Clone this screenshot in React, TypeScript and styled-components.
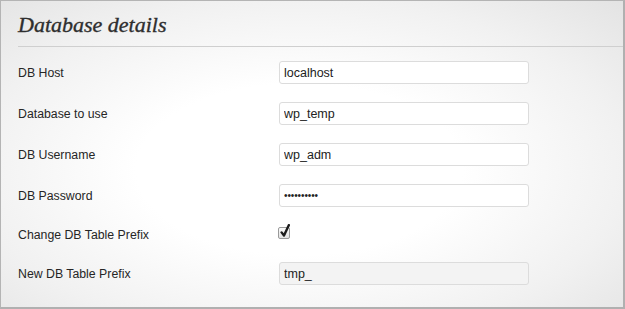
import React from "react";
import styled, { createGlobalStyle } from "styled-components";

const GlobalStyle = createGlobalStyle`
  html, body {
    margin: 0;
    padding: 0;
  }
  body {
    font-family: "Liberation Sans", Arial, sans-serif;
  }
`;

const Frame = styled.div`
  box-sizing: border-box;
  width: 625px;
  height: 309px;
  border-top: 1px solid #b4b4b4;
  border-left: 1px solid #b4b4b4;
  border-right: 2px solid #b0b0b0;
  border-bottom: 2px solid #b0b0b0;
  background: radial-gradient(ellipse 75% 80% at 48% 55%, #ffffff 35%, #f1f1f1 70%, #e2e2e2 100%);
  padding-left: 17px;
  overflow: hidden;
`;

const Header = styled.div`
  height: 45px;
  border-bottom: 1px solid #cfcfcf;
  display: flex;
  align-items: flex-end;
`;

const Title = styled.h2`
  margin: 0 0 8px 0;
  font-family: "Liberation Serif", Georgia, serif;
  font-style: italic;
  font-weight: normal;
  font-size: 22px;
  color: #2e2e2e;
  -webkit-text-stroke: 0.35px #2e2e2e;
`;

const Form = styled.div`
  padding-top: 5px;
`;

const Row = styled.div<{ $compact?: boolean }>`
  display: grid;
  grid-template-columns: 261px 250px;
  align-items: ${(p) => (p.$compact ? "start" : "center")};
  height: ${(p) => (p.$compact ? "28px" : "22px")};
  padding: 9px 0 ${(p) => (p.$compact ? "0" : "10px")};
`;

const Label = styled.label<{ $offset?: number }>`
  font-size: 12.3px;
  color: #262626;
  padding-top: ${(p) => p.$offset ?? 0}px;
`;

const Field = styled.input<{ $readOnly?: boolean; $small?: boolean }>`
  box-sizing: border-box;
  width: 250px;
  height: 23px;
  margin: 0;
  padding: 0 4px;
  border: 1px solid #dcdcdc;
  border-radius: 3px;
  background: ${(p) => (p.$readOnly ? "#f3f3f3" : "#ffffff")};
  font-family: "Liberation Sans", Arial, sans-serif;
  font-size: ${(p) => (p.$small ? "10px" : "12.5px")};
  letter-spacing: ${(p) => (p.$small ? "-0.1px" : "0")};
  color: #222222;
  outline: none;
`;

const CheckBox = styled.span`
  position: relative;
  display: block;
  box-sizing: border-box;
  width: 12px;
  height: 12px;
  margin: 2px 0 0 -1px;
  border: 1px solid #9a9a9a;
  border-radius: 2px;
  background: linear-gradient(#fbfbfb, #e2e2e2);
`;

const CheckMark = styled.svg`
  position: absolute;
  left: 1px;
  top: -4px;
`;

const fields = [
  { label: "DB Host", value: "localhost" },
  { label: "Database to use", value: "wp_temp" },
  { label: "DB Username", value: "wp_adm" },
];

export default function App() {
  return (
    <>
      <GlobalStyle />
      <Frame>
        <Header>
          <Title>Database details</Title>
        </Header>
        <Form>
          {fields.map((f) => (
            <Row key={f.label}>
              <Label>{f.label}</Label>
              <Field type="text" defaultValue={f.value} />
            </Row>
          ))}
          <Row>
            <Label>DB Password</Label>
            <Field type="password" defaultValue="wordpress1" $small />
          </Row>
          <Row $compact>
            <Label $offset={3}>Change DB Table Prefix</Label>
            <CheckBox>
              <CheckMark width="10" height="14" viewBox="0 0 10 14">
                <path
                  d="M1.6 8.4 L4 11.6 L8.8 1.2"
                  fill="none"
                  stroke="#1c1c1c"
                  strokeWidth="2.4"
                  strokeLinecap="round"
                  strokeLinejoin="round"
                />
              </CheckMark>
            </CheckBox>
          </Row>
          <Row>
            <Label>New DB Table Prefix</Label>
            <Field type="text" defaultValue="tmp_" $readOnly readOnly />
          </Row>
        </Form>
      </Frame>
    </>
  );
}
